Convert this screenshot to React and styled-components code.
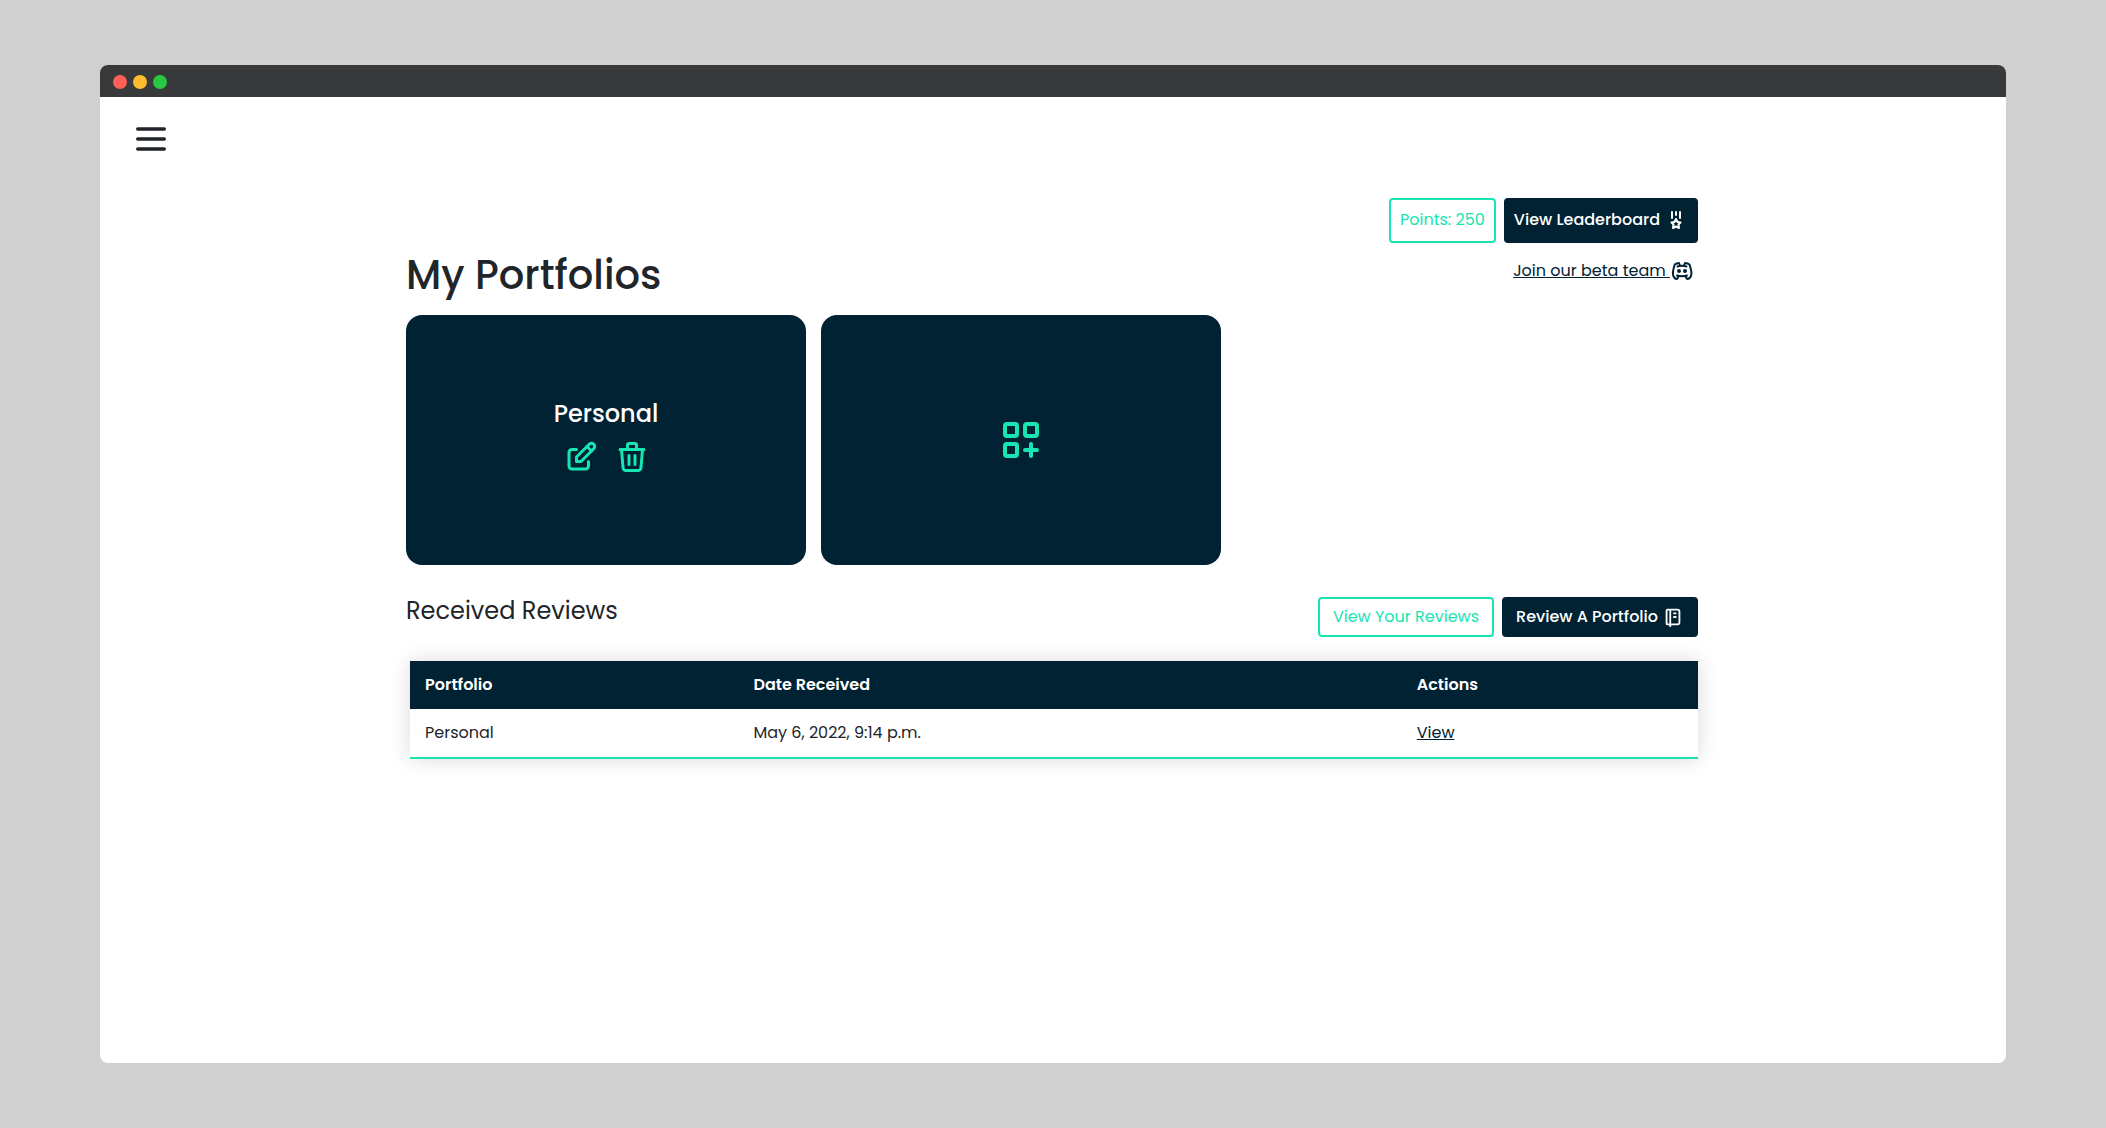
import React from "react";
import styled, { createGlobalStyle, css } from "styled-components";

const navy = "#002233";
const mint = "#17e5b2";
const ink = "#212529";

const GlobalStyle = createGlobalStyle`
  *, *::before, *::after { box-sizing: border-box; }
  body {
    margin: 0;
    background: #d0d0d0;
    color: ${ink};
    font-family: Poppins, Inter, "Open Sans", sans-serif;
    font-size: 16px;
    line-height: 24px;
  }
  h1, h2, h3 { margin: 0; }
`;

const Page = styled.div`
  display: flex;
  min-height: 100vh;
  padding: 65px 100px;
`;

const Window = styled.div`
  flex: 1;
  min-width: 0;
  overflow: hidden;
  border-radius: 8px;
  background: #fff;
`;

const TitleBar = styled.div`
  display: flex;
  align-items: center;
  gap: 6px;
  height: 32px;
  padding: 2px 13px 0;
  background: #38393a;
`;

const Dot = styled.span`
  width: 14px;
  height: 14px;
  border-radius: 50%;
  background: ${(p) => p.$color};
`;

const Header = styled.header`
  display: flex;
  padding: 30px 36px 0;
`;

const IconButton = styled.button`
  display: flex;
  padding: 0;
  border: 0;
  background: none;
  color: ${(p) => p.$color};
  cursor: pointer;
`;

const Main = styled.main`
  max-width: 1294px;
  margin: 0 auto;
  padding: 47px 2px 48px 0;
`;

const Actions = styled.div`
  display: flex;
  justify-content: flex-end;
  gap: 8px;
`;

const box = css`
  display: flex;
  align-items: center;
  gap: 4px;
  border: 2px solid ${(p) => (p.$solid ? navy : mint)};
  border-radius: 4px;
  background: ${(p) => (p.$solid ? navy : "#fff")};
  color: ${(p) => (p.$solid ? "#fff" : mint)};
  font: inherit;
  font-weight: ${(p) => (p.$solid ? 500 : 400)};
  white-space: nowrap;
  ${(p) =>
    p.$tall
      ? css`
          height: 45px;
          padding: 0 ${p.$solid ? 8 : 9}px 2px;
        `
      : css`
          height: 40px;
          padding: 0 ${p.$solid ? 12 : 13}px;
        `}
`;

const Points = styled.div`
  ${box}
`;

const Button = styled.button`
  ${box}
  cursor: pointer;
`;

const TitleRow = styled.div`
  display: flex;
  justify-content: space-between;
  align-items: flex-start;
  padding: 8px 0 16px;
`;

const Title = styled.h1`
  font-size: 40px;
  line-height: 48px;
  font-weight: 500;
`;

const BetaLink = styled.a`
  display: flex;
  align-items: center;
  padding: 8px 4px;
  color: ${navy};
  white-space: pre;
`;

const Cards = styled.div`
  display: flex;
  flex-wrap: wrap;
  gap: 15px;
`;

const Card = styled.article`
  display: flex;
  flex-direction: column;
  align-items: center;
  justify-content: center;
  gap: 11px;
  width: 400px;
  height: 250px;
  border-radius: 16px;
  background: ${navy};
  color: #fff;
`;

const CardTitle = styled.h3`
  font-size: 24px;
  line-height: 28px;
  font-weight: 500;
`;

const CardTools = styled.div`
  display: flex;
  gap: 15px;
  padding-bottom: 5px;
`;

const ReviewsHead = styled.div`
  display: flex;
  justify-content: space-between;
  align-items: flex-start;
  padding: 32px 0 24px;
`;

const Subtitle = styled.h2`
  font-size: 24px;
  line-height: 28px;
  font-weight: 400;
`;

const TableWrap = styled.div`
  padding-left: 4px;
`;

const Table = styled.table`
  width: 100%;
  table-layout: fixed;
  border-collapse: separate;
  border-spacing: 0;
  box-shadow: 0 0 20px rgba(0, 0, 0, 0.15);

  th, td {
    height: 48px;
    padding: 0 15px;
    text-align: left;
  }
  th {
    background: ${navy};
    color: #fff;
    font-weight: 600;
  }
  td {
    height: 50px;
    border-bottom: 2px solid ${mint};
  }
  a { color: ${navy}; }
`;

const Column = styled.col`
  width: ${(p) => p.$share}%;
`;

function Icon({ size = 24, children }) {
  return (
    <svg
      width={size}
      height={size}
      viewBox="0 0 24 24"
      fill="none"
      stroke="currentColor"
      strokeWidth="2"
      strokeLinecap="round"
      strokeLinejoin="round"
      aria-hidden="true"
    >
      {children}
    </svg>
  );
}

const MenuIcon = () => (
  <svg width="30" height="24" viewBox="0 0 30 24" stroke="currentColor" strokeWidth="3.4" strokeLinecap="round" aria-hidden="true">
    <path d="M1.7 2h26.6M1.7 12h26.6M1.7 22h26.6" />
  </svg>
);

const MedalIcon = () => (
  <Icon>
    <path d="M12 4v3M8 4v6M16 4v6" />
    <path d="M12 18.5l-3 1.5l.5-3.5l-2-2l3-.5l1.5-3l1.5 3l3 .5l-2 2l.5 3.5z" />
  </Icon>
);

const DiscordIcon = () => (
  <Icon>
    <circle cx="9" cy="12" r="1" />
    <circle cx="15" cy="12" r="1" />
    <path d="M7.5 7.5c3.5-1 5.5-1 9 0" />
    <path d="M7 16.5c3.5 1 6.5 1 10 0" />
    <path d="M15.5 17c0 1 1.5 3 2 3c1.5 0 2.833-1.667 3.5-3c.667-1.667.5-5.833-1.5-11.5c-1.457-1.015-3-1.34-4.5-1.5l-1 2.5" />
    <path d="M8.5 17c0 1-1.356 3-1.832 3c-1.429 0-2.698-1.667-3.333-3c-.635-1.667-.476-5.833 1.428-11.5c1.388-1.015 2.782-1.34 4.237-1.5l1 2.5" />
  </Icon>
);

const EditIcon = () => (
  <Icon size={36}>
    <path d="M9 7H6a2 2 0 0 0-2 2v9a2 2 0 0 0 2 2h9a2 2 0 0 0 2-2v-3" />
    <path d="M9 15h3l8.5-8.5a1.5 1.5 0 0 0-3-3L9 12v3" />
    <path d="M16 5l3 3" />
  </Icon>
);

const TrashIcon = () => (
  <Icon size={36}>
    <path d="M4 7h16M10 11v6M14 11v6" />
    <path d="M5 7l1 12a2 2 0 0 0 2 2h8a2 2 0 0 0 2-2l1-12" />
    <path d="M9 7V4a1 1 0 0 1 1-1h4a1 1 0 0 1 1 1v3" />
  </Icon>
);

const GridAddIcon = () => (
  <Icon size={48}>
    <rect x="4" y="4" width="6" height="6" rx="1" />
    <rect x="14" y="4" width="6" height="6" rx="1" />
    <rect x="4" y="14" width="6" height="6" rx="1" />
    <path d="M14 17h6M17 14v6" />
  </Icon>
);

const NotebookIcon = () => (
  <Icon size={22}>
    <path d="M6 4h11a2 2 0 0 1 2 2v12a2 2 0 0 1-2 2H6a1 1 0 0 1-1-1V5a1 1 0 0 1 1-1m3 0v18" />
    <path d="M13 8h2M13 12h2" />
  </Icon>
);

const reviews = [{ portfolio: "Personal", received: "May 6, 2022, 9:14 p.m." }];

export default function App() {
  return (
    <Page>
      <GlobalStyle />
      <Window>
        <TitleBar>
          <Dot $color="#ff5f57" />
          <Dot $color="#febc2e" />
          <Dot $color="#28c840" />
        </TitleBar>
        <Header>
          <IconButton $color={ink} aria-label="Menu">
            <MenuIcon />
          </IconButton>
        </Header>
        <Main>
          <Actions>
            <Points $tall>Points: 250</Points>
            <Button $tall $solid>
              View Leaderboard <MedalIcon />
            </Button>
          </Actions>
          <TitleRow>
            <Title>My Portfolios</Title>
            <BetaLink href="#beta">
              {"Join our beta team "}
              <DiscordIcon />
            </BetaLink>
          </TitleRow>
          <Cards>
            <Card>
              <CardTitle>Personal</CardTitle>
              <CardTools>
                <IconButton $color={mint} aria-label="Edit portfolio">
                  <EditIcon />
                </IconButton>
                <IconButton $color={mint} aria-label="Delete portfolio">
                  <TrashIcon />
                </IconButton>
              </CardTools>
            </Card>
            <Card>
              <IconButton $color={mint} aria-label="Add portfolio">
                <GridAddIcon />
              </IconButton>
            </Card>
          </Cards>
          <ReviewsHead>
            <Subtitle>Received Reviews</Subtitle>
            <Actions>
              <Button>View Your Reviews</Button>
              <Button $solid>
                Review A Portfolio <NotebookIcon />
              </Button>
            </Actions>
          </ReviewsHead>
          <TableWrap>
            <Table>
              <colgroup>
                <Column $share={25.5} />
                <Column $share={51.5} />
                <Column $share={23} />
              </colgroup>
              <thead>
                <tr>
                  <th scope="col">Portfolio</th>
                  <th scope="col">Date Received</th>
                  <th scope="col">Actions</th>
                </tr>
              </thead>
              <tbody>
                {reviews.map((r) => (
                  <tr key={r.received}>
                    <td>{r.portfolio}</td>
                    <td>{r.received}</td>
                    <td>
                      <a href="#view">View</a>
                    </td>
                  </tr>
                ))}
              </tbody>
            </Table>
          </TableWrap>
        </Main>
      </Window>
    </Page>
  );
}
